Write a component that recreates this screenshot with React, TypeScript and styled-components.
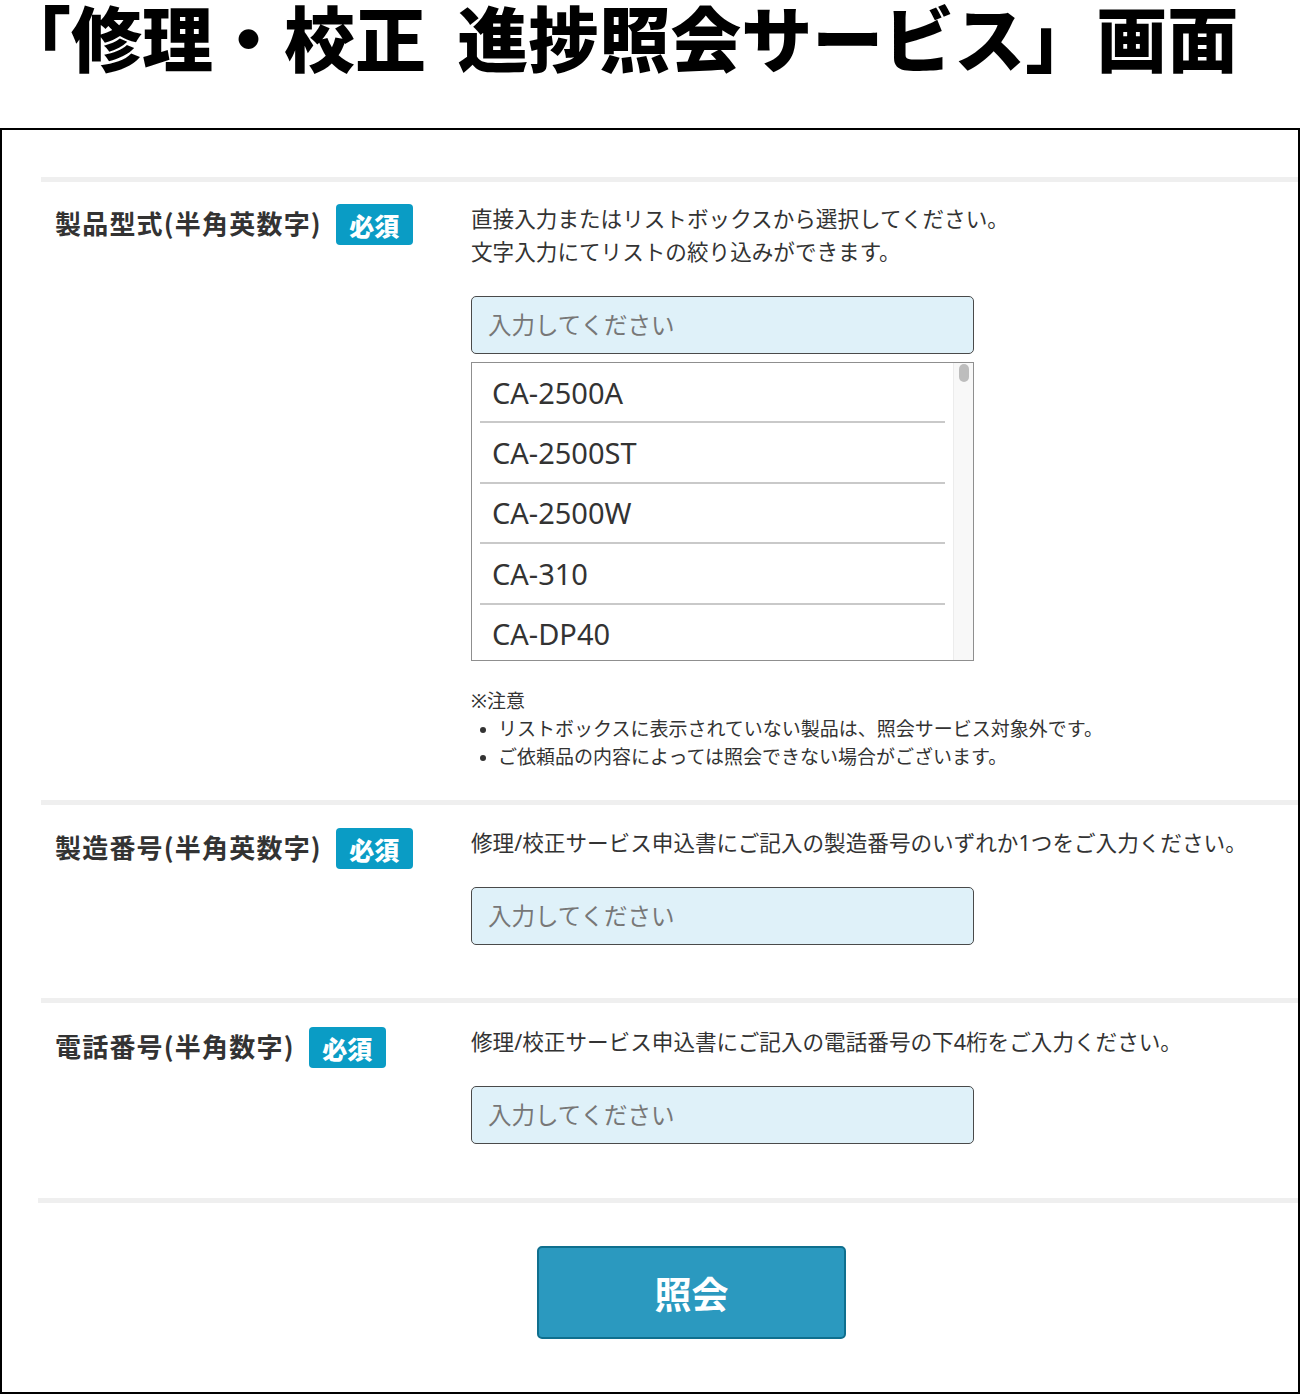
import styled, { createGlobalStyle } from 'styled-components';

const GlobalStyle = createGlobalStyle`
  html, body {
    margin: 0;
    padding: 0;
    background: #fff;
  }
  body {
    font-family: "Noto Sans", "Noto Sans CJK JP", sans-serif;
    color: #333;
  }
`;

// ページタイトル
const Title = styled.h1`
  margin: 0;
  height: 128px;
  padding: 0;
  box-sizing: border-box;
  font-family: "Noto Sans CJK JP", sans-serif;
  font-weight: 900;
  font-size: 71px;
  line-height: 70px;
  word-spacing: 15px;
  color: #000;
  white-space: nowrap;
`;

// 黒枠のフレーム
const Frame = styled.div`
  border: 2px solid #000;
  box-sizing: border-box;
  width: 1300px;
  height: 1266px;
  padding-top: 47px;
`;

const Form = styled.div`
  margin-left: 39px;
`;

// 各入力セクション
const Section = styled.div<{ $top?: number; $bottom?: number }>`
  border-top: 5px solid #efefef;
  display: grid;
  grid-template-columns: 430px 1fr;
  padding: ${(p) => p.$top ?? 23}px 0 ${(p) => p.$bottom ?? 53}px;
`;

const LabelCell = styled.div`
  display: flex;
  align-items: center;
  align-self: start;
  padding-left: 14px;
  gap: 14px;
`;

const Label = styled.span`
  font-family: "Noto Sans CJK JP", sans-serif;
  font-weight: 700;
  font-size: 26px;
  letter-spacing: 1.2px;
  color: #333;
  margin-top: -4px;
`;

const Required = styled.span`
  display: inline-flex;
  align-items: center;
  justify-content: center;
  width: 77px;
  height: 41px;
  border-radius: 4px;
  background: #0a9cc5;
  color: #fff;
  font-family: "Noto Sans CJK JP", sans-serif;
  font-weight: 900;
  font-size: 25px;
`;

const Body = styled.div`
  display: flex;
  flex-direction: column;
`;

const Desc = styled.p`
  margin: -2px 0 2px;
  font-size: 21.6px;
  line-height: 33px;
  color: #333;
`;

const TextInput = styled.input`
  margin-top: 26px;
  width: 503px;
  height: 58px;
  box-sizing: border-box;
  background: #dff1f9;
  border: 1px solid #4a4a4a;
  border-radius: 5px;
  padding: 0 16px;
  font-family: "Noto Sans", "Noto Sans CJK JP", sans-serif;
  font-size: 23.5px;
  color: #333;
  outline: none;

  &::placeholder {
    color: #777;
  }
`;

// リストボックス
const ListBox = styled.div`
  margin-top: 8px;
  width: 503px;
  height: 299px;
  box-sizing: border-box;
  border: 1px solid #8f8f8f;
  display: flex;
  overflow: hidden;
`;

const Options = styled.div`
  flex: 1;
  padding: 0 8px;
  overflow: hidden;
`;

const Option = styled.div`
  height: 60.5px;
  box-sizing: border-box;
  display: flex;
  align-items: center;
  padding-left: 12px;
  font-family: "Noto Sans", sans-serif;
  font-size: 29px;
  color: #333;
  border-bottom: 2px solid #c9c9c9;

  &:first-child {
    height: 60px;
  }
`;

const ScrollTrack = styled.div`
  width: 19px;
  background: #f8f8f8;
  border-left: 1px solid #ececec;
  display: flex;
  justify-content: center;
  padding-top: 1px;
`;

const ScrollThumb = styled.div`
  width: 10px;
  height: 18px;
  border-radius: 5px;
  background: #bdbdbd;
`;

const Notes = styled.div`
  margin-top: 26px;
  font-size: 19px;
  line-height: 28px;
  color: #333;
`;

const NoteList = styled.ul`
  margin: 0;
  padding: 0;
  list-style: none;
`;

const NoteItem = styled.li`
  position: relative;
  padding-left: 27px;

  &::before {
    content: "";
    position: absolute;
    left: 9px;
    top: 12px;
    width: 6px;
    height: 6px;
    border-radius: 50%;
    background: #333;
  }
`;

const Footer = styled.div`
  margin-left: -3px;
  border-top: 5px solid #efefef;
  padding: 43px 0 0 499px;
`;

const SubmitButton = styled.button`
  width: 309px;
  height: 93px;
  box-sizing: border-box;
  background: #2b99bf;
  border: 2px solid #0f6f8e;
  border-radius: 5px;
  color: #fff;
  font-family: "Noto Sans CJK JP", sans-serif;
  font-weight: 700;
  font-size: 37px;
  cursor: pointer;
`;

const models = ['CA-2500A', 'CA-2500ST', 'CA-2500W', 'CA-310', 'CA-DP40'];

const App = () => {
  return (
    <>
      <GlobalStyle />
      <Title>「修理・校正 進捗照会サービス」画面</Title>
      <Frame>
        <Form>
          <Section $top={22} $bottom={29}>
            <LabelCell>
              <Label>製品型式(半角英数字)</Label>
              <Required>必須</Required>
            </LabelCell>
            <Body>
              <Desc>
                直接入力またはリストボックスから選択してください。
                <br />
                文字入力にてリストの絞り込みができます。
              </Desc>
              <TextInput placeholder="入力してください" />
              <ListBox>
                <Options>
                  {models.map((m) => (
                    <Option key={m}>{m}</Option>
                  ))}
                </Options>
                <ScrollTrack>
                  <ScrollThumb />
                </ScrollTrack>
              </ListBox>
              <Notes>
                ※注意
                <NoteList>
                  <NoteItem>リストボックスに表示されていない製品は、照会サービス対象外です。</NoteItem>
                  <NoteItem>ご依頼品の内容によっては照会できない場合がございます。</NoteItem>
                </NoteList>
              </Notes>
            </Body>
          </Section>
          <Section>
            <LabelCell>
              <Label>製造番号(半角英数字)</Label>
              <Required>必須</Required>
            </LabelCell>
            <Body>
              <Desc>修理/校正サービス申込書にご記入の製造番号のいずれか1つをご入力ください。</Desc>
              <TextInput placeholder="入力してください" />
            </Body>
          </Section>
          <Section $top={24} $bottom={54}>
            <LabelCell>
              <Label>電話番号(半角数字)</Label>
              <Required>必須</Required>
            </LabelCell>
            <Body>
              <Desc>修理/校正サービス申込書にご記入の電話番号の下4桁をご入力ください。</Desc>
              <TextInput placeholder="入力してください" />
            </Body>
          </Section>
          <Footer>
            <SubmitButton>照会</SubmitButton>
          </Footer>
        </Form>
      </Frame>
    </>
  );
};

export default App;
